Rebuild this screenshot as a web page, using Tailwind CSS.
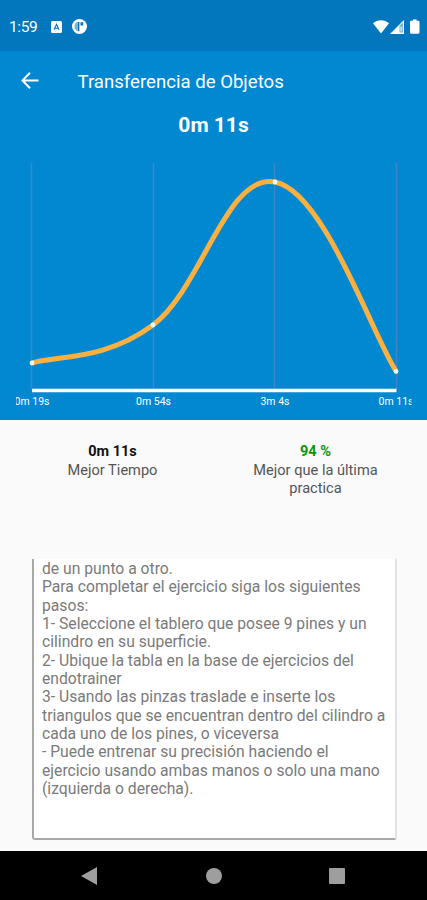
<!DOCTYPE html>
<html lang="es">

<head>
  <meta charset="UTF-8" />
  <meta name="viewport" content="width=device-width, initial-scale=1.0" />
  <title>Transferencia de Objetos</title>
  <script src="https://cdn.jsdelivr.net/npm/@tailwindcss/browser@4"></script>
</head>

<body class="w-[427px] h-[900px] flex flex-col overflow-hidden bg-[#fafafa] font-[Roboto,sans-serif]">
  <!-- status bar -->
  <div class="h-[51px] shrink-0 bg-[#0277bd] text-white flex items-center pl-[9px] pr-[7px] pt-[2px]">
    <span class="text-[15.5px] leading-none tracking-[-0.4px] pt-[2px]">1:59</span>
    <svg class="ml-[14px] w-[11px] h-[12px]" viewBox="0 0 11 12">
      <rect width="11" height="12" rx="1.5" fill="#fff" />
      <path d="M3 8.8 5.5 3.4 8 8.8M4 7.2h3" fill="none" stroke="#0277bd" stroke-width="1.1" />
    </svg>
    <svg class="ml-[9.5px] w-[15px] h-[15px]" viewBox="0 0 15 15">
      <circle cx="7.5" cy="7.5" r="7.5" fill="#fff" />
      <path d="M5.500 2.800C3.600 3.600 2.500 5.300 2.500 7.500s1.100 3.700 3 4.500z" fill="#0277bd" opacity=".55" />
      <path d="M6.500 3v9.200" stroke="#0277bd" stroke-width="1.700" />
      <path d="M8.500 3.200h2.700v3.300H8.500z" fill="#0277bd" />
    </svg>
    <svg class="ml-auto w-[16px] h-[14px]" viewBox="0 0 16 14">
      <path d="M0 3.200C4.600-.8 11.400-.8 16 3.200L8 13.500z" fill="#fff" />
    </svg>
    <svg class="ml-[1px] w-[14px] h-[14px]" viewBox="0 0 14 14">
      <path d="M0 14 14 0v14z" fill="#fff" />
      <path d="M9.500 5.800 12.800 2.500v10H9.500z" fill="#0277bd" opacity=".6" />
      <path d="M11 6.500v5" stroke="#fff" stroke-width="1" />
    </svg>
    <svg class="ml-[6px] mr-[.5px] w-[9.5px] h-[15px]" viewBox="0 0 10 15">
      <path d="M3 0h4v1.500h1.800q1.200 0 1.200 1.200V13.800q0 1.200-1.200 1.200H1.200Q0 15 0 13.800V2.700q0-1.200 1.200-1.200H3z" fill="#fff" />
    </svg>
  </div>

  <!-- toolbar + chart -->
  <div class="h-[369px] shrink-0 bg-[#0288d1] text-white flex flex-col">
    <div class="h-[60px] flex items-center pl-[21px]">
      <svg class="w-[18px] h-[17px] mb-[2px]" viewBox="0 0 18 17" fill="none" stroke="#fff" stroke-width="2">
        <path d="M9 .8 1.500 8.500 9 16.200M1.500 8.500H17.500" />
      </svg>
      <h1 class="ml-[38.5px] mt-[3px] text-[18.600px] whitespace-nowrap">Transferencia de Objetos</h1>
    </div>
    <p class="h-[26px] text-center text-[21px] leading-[28px] font-bold">0m 11s</p>
    <svg class="w-[427px] h-[283px]" viewBox="0 137 427 283" font-family="Roboto, sans-serif">
      <defs>
        <clipPath id="chart"><rect x="16" y="137" width="395.500" height="283" /></clipPath>
      </defs>
      <path d="M31.500 163V389M153.500 163V389M274.500 163V389M396.500 163V389" stroke="#3c87c4" stroke-width="1.500" />
      <path d="M32 390.500H396.500" stroke="#fff" stroke-width="3.500" />
      <path d="M32 363C56.200 355.400 104.400 361.200 153 325S226.400 172.800 275 182S371.700 333.200 396 371" fill="none" stroke="#fbb040" stroke-width="5" />
      <g fill="#e8fbff">
        <circle cx="32" cy="363" r="2.400" />
        <circle cx="153" cy="325" r="2.400" />
        <circle cx="275" cy="182" r="2.400" />
        <circle cx="396" cy="371.500" r="2.400" />
      </g>
      <g fill="#fff" font-size="10.500" text-anchor="middle" clip-path="url(#chart)">
        <text x="32" y="404.500">0m 19s</text>
        <text x="153.500" y="404.500">0m 54s</text>
        <text x="275" y="404.500">3m 4s</text>
        <text x="396" y="404.500">0m 11s</text>
      </g>
    </svg>
  </div>

  <!-- results -->
  <div class="h-[139px] shrink-0 pt-[22px] pl-[11px] pr-[10px] grid grid-cols-2 text-center text-[14.600px] leading-[17.500px] text-[#555]">
    <div>
      <p class="h-[20px] leading-[20px] font-bold text-[14.500px] text-[#111]">0m 11s</p>
      <p>Mejor Tiempo</p>
    </div>
    <div>
      <p class="h-[20px] leading-[20px] font-bold text-[14.500px] text-[#0c960c]">94 %</p>
      <p>Mejor que la última<br />practica</p>
    </div>
  </div>

  <!-- description, scrolled to the end -->
  <div class="ml-[32px] w-[365px] h-[281px] shrink-0 bg-white border-l-2 border-b-2 border-r-2 border-l-[#a8a8a8] border-b-[#a8a8a8] border-r-[#e2e2e2] rounded-b-[3px] pl-[8px] pt-[1px] text-[15.700px] leading-[18.350px] text-[#7a7a7a] whitespace-nowrap">
    <p>de un punto a otro.</p>
    <p>Para completar el ejercicio siga los siguientes<br />pasos:</p>
    <p>1- Seleccione el tablero que posee 9 pines y un<br />cilindro en su superficie.</p>
    <p>2- Ubique la tabla en la base de ejercicios del<br />endotrainer</p>
    <p>3- Usando las pinzas traslade e inserte los<br />triangulos que se encuentran dentro del cilindro a<br />cada uno de los pines, o viceversa</p>
    <p>- Puede entrenar su precisión haciendo el<br />ejercicio usando ambas manos o solo una mano<br />(izquierda o derecha).</p>
  </div>

  <!-- navigation bar -->
  <div class="mt-auto h-[49px] shrink-0 bg-black flex items-center justify-between pl-[81px] pr-[82px]">
    <svg class="w-[16px] h-[18px]" viewBox="0 0 16 18"><path d="M0 9 16 0v18z" fill="#9e9e9e" /></svg>
    <div class="size-[16px] ml-[1px] rounded-full bg-[#9e9e9e]"></div>
    <div class="size-[16px] rounded-[1px] bg-[#9e9e9e]"></div>
  </div>
</body>

</html>
